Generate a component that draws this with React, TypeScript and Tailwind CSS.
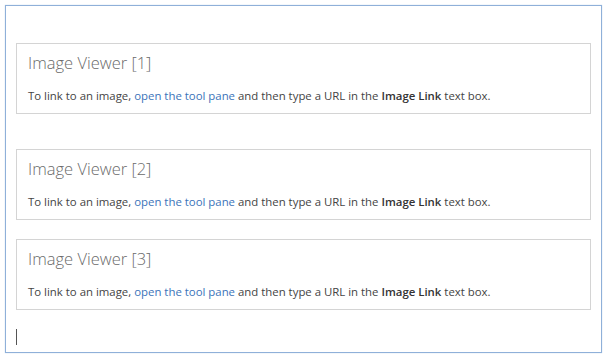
import React from "react"

type Viewer = { id: number; gapTop: string }

const viewers: Viewer[] = [
	{ id: 1, gapTop: "mt-0" },
	{ id: 2, gapTop: "mt-[35px]" },
	{ id: 3, gapTop: "mt-[19px]" },
]

function ImageViewer({ id, gapTop }: Viewer) {
	return (
		<div
			className={`${gapTop} h-[71px] w-[575px] border border-[#d4d4d4] bg-white px-[11px] pt-[8px]`}
		>
			<h2 className="text-[16.5px] font-light leading-[22px] text-[#6a6a6a]">
				Image Viewer [{id}]
			</h2>
			<p className="mt-[14px] text-[11.4px] leading-[16px] text-[#444]">
				To link to an image,{" "}
				<a href="#" className="text-[#3b73b9]">
					open the tool pane
				</a>{" "}
				and then type a URL in the{" "}
				<span className="font-semibold text-[#333]">Image Link</span> text box.
			</p>
		</div>
	)
}

export default function App() {
	return (
		<div
			className="h-[361px] w-[607px] bg-white p-[5px]"
			style={{ fontFamily: '"Open Sans", "Noto Sans", sans-serif' }}
		>
			<div className="flex h-[348px] w-[597px] flex-col border border-[#8fb0d9] pl-[10px] pt-[37px] shadow-[0_0_1px_#b9cde8]">
				{viewers.map((v) => (
					<ImageViewer key={v.id} {...v} />
				))}
				<div className="mt-[19px] h-[16px] w-px bg-[#555]" />
			</div>
		</div>
	)
}
